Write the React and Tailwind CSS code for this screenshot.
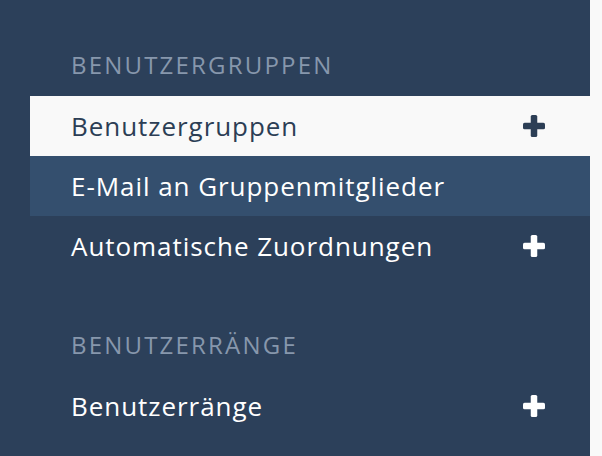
function PlusIcon({ className }) {
  return (
    <svg viewBox="0 0 22 22" width="22" height="22" className={className}>
      <rect x="7.75" y="0" width="6.5" height="22" rx="1.6" fill="currentColor" />
      <rect x="0" y="7.75" width="22" height="6.5" rx="1.6" fill="currentColor" />
    </svg>
  );
}

const sections = [
  {
    title: "BENUTZERGRUPPEN",
    items: [
      { label: "Benutzergruppen", plus: true, state: "active" },
      { label: "E-Mail an Gruppenmitglieder", plus: false, state: "hover" },
      { label: "Automatische Zuordnungen", plus: true },
    ],
  },
  {
    title: "BENUTZERRÄNGE",
    items: [{ label: "Benutzerränge", plus: true }],
  },
];

export default function App() {
  return (
    <div
      className="flex h-[456px] w-[602px] overflow-hidden bg-[#f9f9f9]"
      style={{ fontFamily: '"Open Sans", sans-serif' }}
    >
      <nav className="flex w-[590px] flex-col gap-[53px] bg-[#2c405a] pl-[30px] pt-[49px]">
        {sections.map((section) => (
          <div key={section.title}>
            <h3 className="mb-[15px] pl-[41px] text-[24px] leading-[32px] tracking-[2.2px] text-[#8797ac]">
              {section.title}
            </h3>
            <ul>
              {section.items.map((item) => (
                <li
                  key={item.label}
                  className={
                    "flex h-[60px] items-center justify-between pl-[41px] pr-[45px] text-[26px] leading-[34px] tracking-[0.95px] " +
                    (item.state === "active"
                      ? "bg-[#f9f9f9] text-[#2c3e55]"
                      : item.state === "hover"
                      ? "bg-[#344f6e] text-white"
                      : "text-white")
                  }
                >
                  <span className="pb-[1px]">{item.label}</span>
                  {item.plus && <PlusIcon />}
                </li>
              ))}
            </ul>
          </div>
        ))}
      </nav>
    </div>
  );
}
